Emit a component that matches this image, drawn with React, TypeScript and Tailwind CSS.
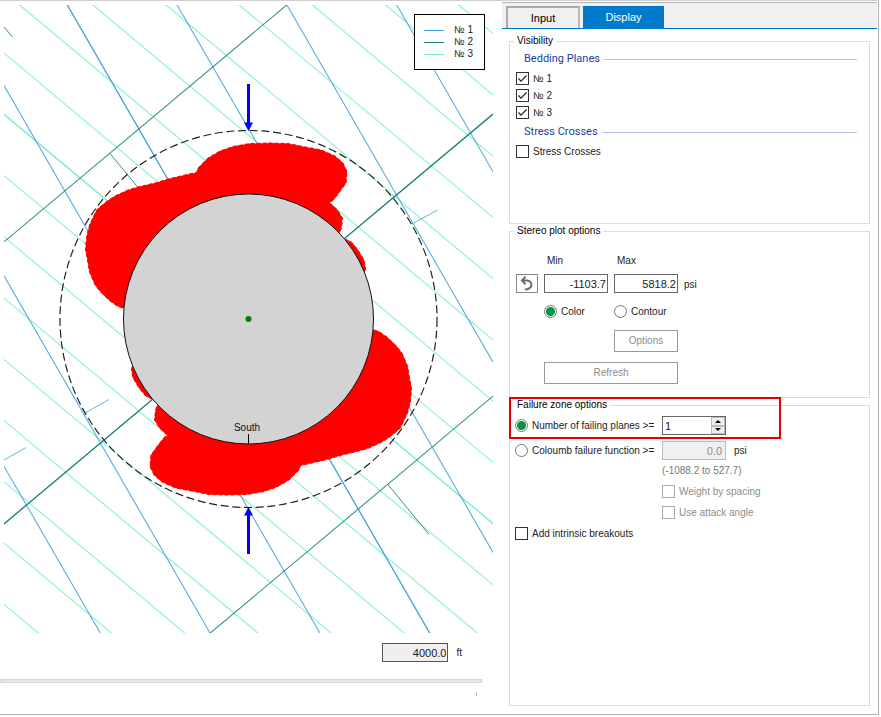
import { useState } from 'react';
import type { ReactNode } from 'react';

const CX = 248.5;
const CY = 319;

// Plot area edges
const LEFT = 4;
const RIGHT = 493;
const TOP = 5;
const BOTTOM = 633;

const planes = [
  { name: '№ 1', color: '#3f9fdc' },
  { name: '№ 2', color: '#128078' },
  { name: '№ 3', color: '#6ff0c0' },
];

// Parallel traces of one bedding plane, "step" is the vertical distance between them
function Traces({ slope, step, count, color }: { slope: number; step: number; count: number; color: string }) {
  const lines = [];
  for (let k = -count; k <= count; k++) {
    const y1 = CY + k * step + slope * (LEFT - CX);
    const y2 = CY + k * step + slope * (RIGHT - CX);
    lines.push(
      <line key={k} x1={LEFT} y1={y1} x2={RIGHT} y2={y2} stroke={color} strokeWidth={k === 0 ? 1.3 : 1.1} strokeOpacity={k === 0 ? 1 : 0.85} />
    );
  }
  return <g>{lines}</g>;
}

const lobe =
  'M123 308L118 306.5 110 301 101.5 293 95 285 89.5 272 87.5 260 85.5 250 86.5 237 89.5 225 96.5 210 106.5 201.5 115 196 128 190 138 187 157 182.5 168 179 185 175 196.5 172.5 198 168 208 158 220 151 233 146.5 250 143.5 270 143 288 143.5 303 146.5 321.5 150 335 156 343 163 347 171.5 346 183 340 191.5 333 200.5 329.5 202.5 337.5 210 342.5 218 341.5 228 339.5 233 248 300Z';
const sliver = 'M345 239L351.5 242 358 250 364 260 365.5 268 365 272 340 265Z';

function FailureZone() {
  return (
    <g fill="#f00" stroke="#f00" strokeWidth="1" strokeDasharray="4 2" strokeLinejoin="round">
      <path d={lobe} />
      <path d={sliver} />
    </g>
  );
}

function StereoPlot() {
  return (
    <svg viewBox="4 5 489 628" className="block h-auto w-full" role="img" aria-label="Failure zone plot">
      <clipPath id="plot">
        <rect x={LEFT} y={TOP} width={RIGHT - LEFT} height={BOTTOM - TOP} />
      </clipPath>
      <g clipPath="url(#plot)">
        <Traces slope={0.837} step={61.25} count={8} color={planes[2].color} />
        <Traces slope={1.733} step={190.3} count={3} color={planes[0].color} />
        <Traces slope={-0.838} step={282} count={1} color={planes[1].color} />
        <path d="M412 224L437.5 210M85 413L109 399.5M4 460L26 447.5" stroke={planes[0].color} strokeOpacity="0.8" />
        <path d="M110 153.500L138 187.500M4 27L12.500 37M388 484.500L429 534.500" stroke={planes[1].color} strokeOpacity="0.85" />
      </g>
      <FailureZone />
      <g transform="rotate(180 248.5 319)">
        <FailureZone />
      </g>
      <circle cx={CX} cy={CY} r="188.500" fill="none" stroke="#222" strokeWidth="1.200" strokeDasharray="8 3.700" />
      <circle cx={CX} cy={CY} r="125" fill="#d3d3d3" stroke="#111" />
      <circle cx={CX} cy={CY} r="3" fill="#008000" />
      <path d="M248.500 434V444" stroke="#000" />
      <text x="247" y="431" textAnchor="middle" fontSize="10" fill="#111">
        South
      </text>
      {/* stress direction */}
      <g stroke="#00f" fill="#00f">
        <path d="M248.500 84V124M248.500 554V514" strokeWidth="3" />
        <path d="M244 122.500H253L248.500 131ZM244 515.500H253L248.500 507Z" stroke="none" />
      </g>
    </svg>
  );
}

function Legend() {
  return (
    <ul className="absolute top-[9px] right-2 w-[71px] border border-black bg-white py-[9px] pl-[9px]">
      {planes.map(p => (
        <li key={p.name} className="flex h-3 items-center gap-2.5 leading-3">
          <svg width="20" height="3">
            <path d="M0 1.5H20" stroke={p.color} />
          </svg>
          {p.name}
        </li>
      ))}
    </ul>
  );
}

function Group({ title, className, children }: { title: string; className: string; children: ReactNode }) {
  return (
    <fieldset className={`min-w-0 border border-[#dcdcdc] ${className}`}>
      <legend className="ml-1 px-[3px] leading-[14px] text-black">{title}</legend>
      {children}
    </fieldset>
  );
}

function Heading({ children }: { children: ReactNode }) {
  return (
    <h3 className="mr-3 ml-3.5 flex h-[22px] items-center gap-1 font-['Roboto',sans-serif] text-[11px] text-[#1a3fa0] after:h-px after:flex-1 after:bg-[#b4c3e6]">
      {children}
    </h3>
  );
}

type CheckProps = { label: string; className?: string; disabled?: boolean; defaultChecked?: boolean };

function Check({ label, className = '', disabled, defaultChecked }: CheckProps) {
  return (
    <label className={`flex items-center gap-1 whitespace-nowrap ${disabled ? 'text-[#8c8c8c]' : ''} ${className}`}>
      <span className="relative size-[13px] shrink-0">
        <input
          type="checkbox"
          disabled={disabled}
          defaultChecked={defaultChecked}
          className="peer block size-[13px] appearance-none border border-[#333] bg-white disabled:border-[#aaa]"
        />
        <svg viewBox="0 0 13 13" className="pointer-events-none absolute inset-0 hidden peer-checked:block">
          <path d="M2.5 6.5L5 9.200L10.500 3.500" fill="none" stroke="#222" strokeWidth="1.200" />
        </svg>
      </span>
      {label}
    </label>
  );
}

type RadioProps = { label: string; name: string; checked: boolean; onChange: () => void };

function Radio({ label, name, checked, onChange }: RadioProps) {
  return (
    <label className="flex items-center gap-1 whitespace-nowrap">
      <input
        type="radio"
        name={name}
        checked={checked}
        onChange={onChange}
        className="size-[13px] shrink-0 appearance-none rounded-full border border-[#777] bg-white bg-clip-content p-px checked:bg-[#00963f]"
      />
      {label}
    </label>
  );
}

const field = 'h-[19px] w-full border border-[#666] bg-white px-px text-right text-[11px] leading-4 text-[#222]';
const button = 'h-[22px] border border-[#999] bg-white text-[#8c8c8c]';

export default function App() {
  const [mode, setMode] = useState('color');
  const [criterion, setCriterion] = useState('planes');
  const [count, setCount] = useState(1);

  return (
    <div className="mr-0.5 flex min-h-[calc(100vh-2px)] border-t border-r border-b border-t-[#d0d0d0] border-r-[#b0b0b0] border-b-[#b0b0b0] bg-white font-['Liberation_Sans',Arial,sans-serif] text-[10px] leading-4 text-[#222]">
      <main className="min-w-0 flex-1">
        <div className="relative mt-1 mr-[9px] ml-1">
          <StereoPlot />
          <Legend />
        </div>
        <label className="mt-2.5 flex items-center justify-end gap-2 pr-10">
          <input readOnly value="4000.0" className="h-[19px] w-[66px] border border-[#555] bg-[#f0eeee] px-px text-right text-[11px]" />
          ft
        </label>
        <div className="mt-[17px] mr-5 h-1 border border-[#d6d8d8] bg-[#e6e8e8]" />
        <div className="mt-[9px] mr-[25px] ml-auto h-1 w-px bg-[#bbb]" />
      </main>

      <aside className="flex w-[376px] shrink-0 flex-col">
        <div className="mt-px mr-px flex h-[27px] items-end gap-[3px] border-t border-b border-t-[#b4b4b4] border-b-[#007acc] bg-[#f0f0f0] pl-1 text-[11px]">
          <button className="h-[22px] w-[74px] border-2 border-b-0 border-t-[#aaa] border-r-[#bbb] border-l-[#aaa] bg-[#f0f0f0] text-black">
            Input
          </button>
          <button className="h-[22px] w-[81px] bg-[#007acc] text-white">Display</button>
        </div>

        <div className="flex flex-1 flex-col pt-[5px] pr-2 pb-2 pl-[7px]">
          <Group title="Visibility" className="h-[190px]">
            <Heading>Bedding Planes</Heading>
            {planes.map(p => (
              <Check key={p.name} label={p.name} defaultChecked className="ml-1.5 h-[17px]" />
            ))}
            <Heading>Stress Crosses</Heading>
            <Check label="Stress Crosses" className="ml-1.5 h-[17px]" />
          </Group>

          <Group title="Stereo plot options" className="h-[174px]">
            <div className="grid grid-cols-[22px_64px_64px_auto] gap-x-1.5 gap-y-2.5 pt-[15px] pl-1.5">
              <button aria-label="Reset range" className="grid h-[19px] place-items-center self-end border border-[#888] bg-white">
                <svg width="14" height="15" viewBox="0 0 14 15" fill="none" stroke="#6c6c6c" strokeWidth="2">
                  <path d="M5.500 0.800L2 4.500L5.500 8.200" />
                  <path d="M2 4.500H7.500C13.500 5.500 12.500 13 5 13.500" />
                </svg>
              </button>
              <label className="flex flex-col gap-[5px]">
                <span className="pl-[3px]">Min</span>
                <input defaultValue="-1103.7" className={field} />
              </label>
              <label className="flex flex-col gap-[5px]">
                <span className="pl-[3px]">Max</span>
                <input defaultValue="5818.2" className={field} />
              </label>
              <span className="self-end">psi</span>

              <div className="col-start-2 flex h-[17px] items-center">
                <Radio label="Color" name="mode" checked={mode === 'color'} onChange={() => setMode('color')} />
              </div>
              <Radio label="Contour" name="mode" checked={mode === 'contour'} onChange={() => setMode('contour')} />
              <button disabled className={`col-start-3 ${button}`}>
                Options
              </button>
              <button disabled className={`col-span-2 col-start-2 ${button}`}>
                Refresh
              </button>
            </div>
          </Group>

          <Group title="Failure zone options" className="relative flex-1">
            <div className="grid grid-cols-[147px_64px_1fr] items-center pt-1 pl-[5px]">
              <Radio
                label="Number of failing planes >="
                name="criterion"
                checked={criterion === 'planes'}
                onChange={() => setCriterion('planes')}
              />
              <div className="flex h-[19px] border border-[#666]">
                <input
                  aria-label="Number of failing planes"
                  value={count}
                  onChange={e => setCount(Number(e.target.value) || 0)}
                  className="w-0 min-w-0 flex-1 pl-0.5 text-[11px]"
                />
                <div className="flex w-3.5 flex-col">
                  <button aria-label="Increase" onClick={() => setCount(count + 1)} className="grid flex-1 place-items-center border border-[#bbb] bg-[#eee]">
                    <svg width="6" height="3" viewBox="0 0 6 3">
                      <path d="M0 3H6L3 0Z" />
                    </svg>
                  </button>
                  <button aria-label="Decrease" onClick={() => setCount(Math.max(1, count - 1))} className="grid flex-1 place-items-center border border-[#bbb] bg-[#eee]">
                    <svg width="6" height="3" viewBox="0 0 6 3">
                      <path d="M0 0H6L3 3Z" />
                    </svg>
                  </button>
                </div>
              </div>

              <div className="col-start-1 mt-1.5">
                <Radio
                  label="Coloumb failure function >="
                  name="criterion"
                  checked={criterion === 'coulomb'}
                  onChange={() => setCriterion('coulomb')}
                />
              </div>
              <input
                aria-label="Coloumb failure function"
                disabled
                defaultValue="0.0"
                className="mt-1.5 h-[19px] border border-[#bbb] bg-[#f0f0f0] pr-[3px] text-right text-[11px] text-[#8c8c8c]"
              />
              <span className="mt-1.5 pl-2">psi</span>

              <span className="col-start-2 h-[21px] leading-[21px] whitespace-nowrap text-[#777]">(-1088.2 to 527.7)</span>
              <Check label="Weight by spacing" disabled className="col-start-2 h-[21px]" />
              <Check label="Use attack angle" disabled className="col-start-2 h-[21px]" />
              <Check label="Add intrinsic breakouts" className="col-start-1 h-[21px]" />
            </div>
            <div className="pointer-events-none absolute -top-[15px] -left-px h-[42px] w-[272px] border-2 border-[#e80000]" />
          </Group>
        </div>
      </aside>
    </div>
  );
}
